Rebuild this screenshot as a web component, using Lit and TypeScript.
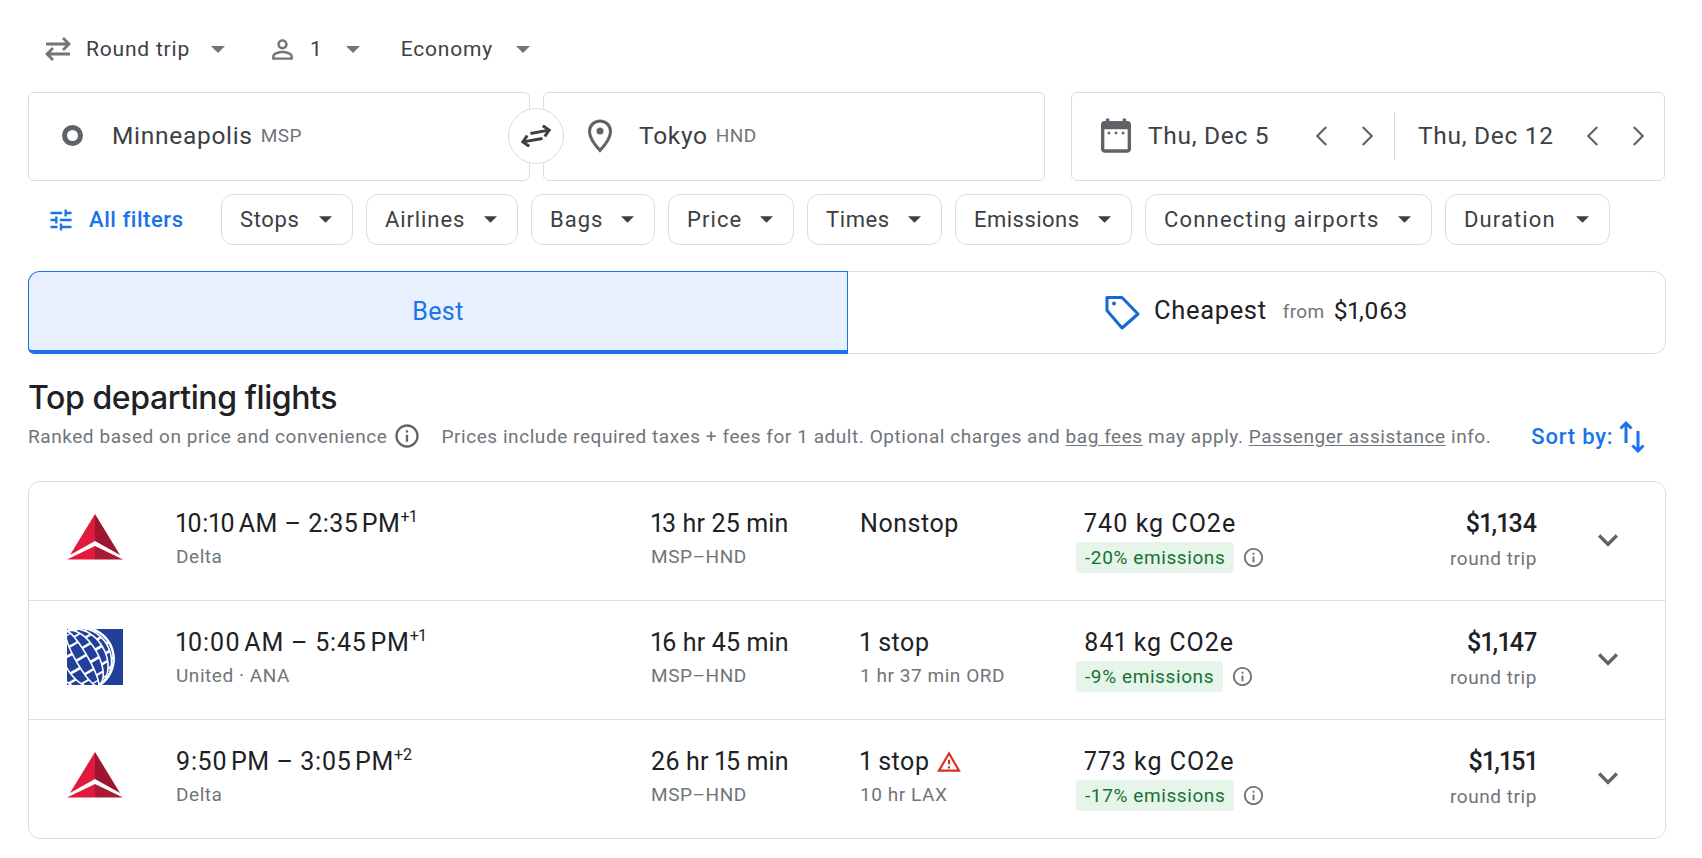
import { LitElement, html, css, svg } from "lit";
import { customElement } from "lit/decorators.js";

const P = {
  person: "M12 5.9c1.16 0 2.1.94 2.1 2.1s-.94 2.1-2.1 2.1S9.9 9.16 9.9 8s.94-2.1 2.1-2.1m0 9c2.97 0 6.1 1.46 6.1 2.1v1.1H5.9V17c0-.64 3.13-2.1 6.1-2.1M12 4C9.79 4 8 5.79 8 8s1.79 4 4 4 4-1.79 4-4-1.79-4-4-4zm0 9c-2.67 0-8 1.34-8 4v3h16v-3c0-2.66-5.33-4-8-4z",
  tune: "M3 17v2h6v-2H3zM3 5v2h10V5H3zm10 16v-2h8v-2h-8v-2h-2v6h2zM7 9v2H3v2h4v2h2V9H7zm14 4v-2H11v2h10zm-6-4h2V7h4V5h-4V3h-2v6z",
  cal: "M19 3h-1V1.500h-2V3H8V1.500H6V3H5C3.900 3 3 3.900 3 5v15c0 1.100.9 2 2 2h14c1.100 0 2-.9 2-2V5c0-1.100-.9-2-2-2zm0 17H5V8h14v12zM7 9.500h1.500V11H7zm4.250 0h1.500V11h-1.500zm4.250 0H17V11h-1.500z",
  warn: "M12 5.99L19.53 19H4.47L12 5.99M12 2L1 21h22L12 2zm1 14h-2v2h2v-2zm0-6h-2v4h2v-4z",
  info: "M11 7h2v2h-2zm0 4h2v6h-2zm1-9C6.48 2 2 6.48 2 12s4.48 10 10 10 10-4.48 10-10S17.52 2 12 2zm0 18c-4.41 0-8-3.59-8-8s3.59-8 8-8 8 3.59 8 8-3.59 8-8 8z",
  expand: "M16.59 8.59L12 13.17 7.41 8.59 6 10l6 6 6-6z",
  prev: "M15 5.500L8.500 12l6.500 6.500 1-1L10.500 12 16 6.500z",
  next: "M9 5.500l6.500 6.500L9 18.500l-1-1L13.500 12 8 6.500z",
};

const icon = (d: string, size: number, cls = "") =>
  html`<svg class="ic ${cls}" width=${size} height=${size} viewBox="0 0 24 24" fill="currentColor"><path d=${d}></path></svg>`;

const caret = (cls = "") =>
  html`<svg class="caret ${cls}" width="14" height="7" viewBox="0 0 14 7"><path d="M0 0h14L7 7z" fill="currentColor"></path></svg>`;

const delta = html`<svg width="56" height="46" viewBox="0 0 56 46" class="logo">
  <path d="M28 0L3 41 28 27z" fill="#e01a3c"></path>
  <path d="M28 0L53 41 28 27z" fill="#9c1631"></path>
  <path d="M0 45.500L28 32V45.500z" fill="#e01a3c"></path>
  <path d="M56 45.500L28 32V45.500z" fill="#a81a35"></path>
</svg>`;

/* United globe: an orthographic sphere whose axis is tilted 30deg. */
const G = { cx: 15.4, cy: 29.8, r: 31.5, tilt: (-30 * Math.PI) / 180 };
const rad = (d: number) => (d * Math.PI) / 180;
const gp = (lon: number, lat: number) => {
  const x = G.r * Math.cos(rad(lat)) * Math.sin(rad(lon));
  const y = -G.r * Math.sin(rad(lat));
  const c = Math.cos(G.tilt);
  const s = Math.sin(G.tilt);
  return `${(G.cx + x * c - y * s).toFixed(2)},${(G.cy + x * s + y * c).toFixed(2)}`;
};
const lons = [-90, -60, -35, -12, 10, 30, 48, 64, 78, 90];
const lats = [-75, -60, -45, -30, -15, 0, 15, 30, 45, 60, 75];
const range = (a: number, b: number, n: number) => Array.from({ length: n + 1 }, (_, i) => a + ((b - a) * i) / n);
const meridians = lons.map((lon) => svg`<polyline points=${range(-90, 90, 36).map((l) => gp(lon, l)).join(" ")} fill="none" stroke="#fff" stroke-width=${lon === 90 ? 2 : 1.6}></polyline>`);
const blocks = lats.flatMap((lat, j) =>
  lons.slice(0, -1).flatMap((lon, i) => {
    if ((i + j) % 2) return [];
    const next = lons[i + 1];
    const pts = [...range(lon, next, 4).map((l) => gp(l, lat)), ...range(next, lon, 4).map((l) => gp(l, lat + 5))];
    return [svg`<polygon points=${pts.join(" ")} fill="#fff"></polygon>`];
  })
);

const united = html`<svg width="56" height="56" viewBox="0 0 56 56" class="logo u">
  <rect width="56" height="56" fill="#21409a"></rect>
  ${meridians}${blocks}
</svg>`;

const filters = [
  { n: "Stops", w: 132, ls: 0.65 },
  { n: "Airlines", w: 152, ls: 0.9 },
  { n: "Bags", w: 124, ls: 1 },
  { n: "Price", w: 126, ls: 1.1 },
  { n: "Times", w: 135, ls: 0.6 },
  { n: "Emissions", w: 177, ls: 0.48 },
  { n: "Connecting airports", w: 287, ls: 1.18 },
  { n: "Duration", w: 165, ls: 1.12 },
];

const flights = [
  { logo: delta, time: "10:10\u202FAM – 2:35\u202FPM", ls: 0.48, plus: "+1", air: "Delta", dur: "13 hr 25 min", stops: "Nonstop", layover: "", warn: false, co2: "740 kg CO2e", em: "-20% emissions", price: "$1,134" },
  { logo: united, time: "10:00\u202FAM – 5:45\u202FPM", ls: 0.79, plus: "+1", air: "United · ANA", dur: "16 hr 45 min", stops: "1 stop", layover: "1 hr 37 min ORD", warn: false, co2: "841 kg CO2e", em: "-9% emissions", price: "$1,147" },
  { logo: delta, time: "9:50\u202FPM – 3:05\u202FPM", ls: 0.59, plus: "+2", air: "Delta", dur: "26 hr 15 min", stops: "1 stop", layover: "10 hr LAX", warn: true, co2: "773 kg CO2e", em: "-17% emissions", price: "$1,151" },
];

@customElement("app-root")
export class AppRoot extends LitElement {
  static styles = css`
    :host { display: block; width: 1702px; height: 858px; background: #fff; color: #3c4043; font-family: Roboto, "Liberation Sans", sans-serif; overflow: hidden; }
    .page { padding: 31px 37px 0 28px; }
    .ic { display: block; flex: none; }
    .caret { display: block; flex: none; color: #5f6368; }

    .top { display: flex; align-items: center; height: 36px; font-size: 21px; letter-spacing: 0.8px; padding-left: 16px; }
    .top .item { display: flex; align-items: center; }
    .top .ic { color: #70757a; }
    .top .caret { color: #70757a; }
    .trip .arrows { display: block; flex: none; color: #70757a; }
    .trip span { margin: 0 21px 0 14px; }
    .pax { margin-left: 42px; }
    .pax span { margin: 0 23px 0 12px; }
    .cabin { margin-left: 41px; }
    .cabin span { margin-right: 23px; }

    .search { display: flex; margin-top: 25px; height: 89px; position: relative; }
    .box { border: 1px solid #dadce0; border-radius: 6px; display: flex; align-items: center; box-sizing: border-box; font-size: 24.500px; letter-spacing: 0.7px; padding-bottom: 2px; }
    .origin { width: 502px; padding-left: 33px; }
    .origin .dot { width: 21px; height: 21px; box-sizing: border-box; border: 5px solid #5f6368; border-radius: 50%; margin-right: 29px; }
    .dest { width: 502px; margin-left: 13px; padding-left: 43px; }
    .dest .pin { color: #5f6368; margin-right: 26px; display: block; flex: none; }
    .code { font-size: 19px; color: #70757a; margin-left: 8px; letter-spacing: 0.4px; }
    .swap { position: absolute; left: 480px; top: 16px; width: 56px; height: 56px; border: 1px solid #dadce0; border-radius: 50%; background: #fff; box-sizing: border-box; display: flex; align-items: center; justify-content: center; color: #3c4043; }
    .dates { margin-left: 26px; flex: 1; padding-left: 24px; }
    .dates .cal { color: #5f6368; margin-right: 12px; }
    .date { width: 122px; white-space: nowrap; }
    .dates .arrow { color: #5f6368; }
    .dates .first { margin-left: 33px; }
    .dates .gap { margin-left: 11px; }
    .divider { width: 1px; height: 48px; background: #dadce0; margin: 0 23px 0 8px; }
    .d2 { width: 137px; }
    .d2 + .first { margin-left: 19px; }

    .chips { display: flex; align-items: center; gap: 13px; margin-top: 13px; height: 51px; font-size: 22px; }
    .all { display: flex; align-items: center; color: #1a73e8; font-weight: 500; width: 180px; padding-left: 19px; box-sizing: border-box; letter-spacing: 0.55px; }
    .all .ic { margin-right: 14px; }
    .chip { display: flex; align-items: center; justify-content: space-between; height: 51px; box-sizing: border-box; border: 1px solid #dadce0; border-radius: 12px; padding: 0 20px 0 18px; }
    .chip .caret { width: 13px; height: 7px; color: #3c4043; }

    .tabs { display: flex; margin-top: 26px; height: 83px; width: 1638px; box-sizing: border-box; border: 1px solid #dadce0; border-radius: 12px; position: relative; }
    .tab { flex: 1; display: flex; align-items: center; justify-content: center; font-size: 25px; letter-spacing: 0.4px; }
    .best { background: #e8f0fe; color: #1a73e8; margin: -1px 0 -1px -1px; border: 1px solid #1a73e8; border-bottom: 4px solid #1a73e8; border-radius: 12px 0 0 6px; flex: none; width: 820px; box-sizing: border-box; }
    .cheap { color: #202124; padding: 0 0 5px 0; font-size: 25.500px; letter-spacing: 0.65px; }
    .cheap .tag { color: #1967d2; margin: 5px 13px 0 0; }
    .from { font-size: 19px; color: #70757a; margin: 2px 9px 0 16px; letter-spacing: 0.4px; }
    .low { font-weight: 400; letter-spacing: 0.5px; font-size: 24.500px; font-variant-numeric: proportional-nums; }

    h2 { margin: 25px 0 0; font-size: 32px; line-height: 38px; font-weight: 500; color: #202124; font-family: Inter, Roboto, sans-serif; letter-spacing: -0.4px; }
    .note { display: flex; align-items: center; height: 40px; margin-top: -1px; font-size: 19px; letter-spacing: 0.56px; color: #70757a; white-space: nowrap; }
    .note .ic { color: #5f6368; margin: 0 20px 0 6px; }
    .note u { text-underline-offset: 2px; }
    .sort { display: flex; align-items: center; color: #1a73e8; font-size: 22px; font-weight: 500; margin-left: 40px; letter-spacing: 0.8px; }
    .sort svg { margin-left: 5px; }

    .list { margin-top: 25px; width: 1638px; height: 358px; box-sizing: border-box; border: 1px solid #dadce0; border-radius: 12px; display: flex; flex-direction: column; }
    .row { flex: 1; display: grid; grid-template-columns: 109px 475px 209px 216px 304px 157px 1fr; padding: 26px 0 0 38px; box-sizing: border-box; border-top: 1px solid #dadce0; }
    .row:first-child { border-top: 0; }
    .logo-cell { padding-top: 6px; }
    .logo { display: block; }
    .logo.u { margin-top: -4px; }
    .t { font-size: 25px; line-height: 32px; color: #202124; display: flex; align-items: center; white-space: nowrap; font-variant-numeric: proportional-nums; letter-spacing: 0.15px; }
    .t sup { font-size: 16px; line-height: 1; align-self: flex-start; margin-top: 1px; letter-spacing: 0; }
    .s { font-size: 19px; line-height: 24px; margin-top: 5px; color: #70757a; letter-spacing: 0.55px; }
    .stops { letter-spacing: 0.55px; }
    .t .ic { color: #d93025; margin-left: 6px; }
    .co2 { padding-left: 8px; letter-spacing: 1px; }
    .em { display: flex; align-items: center; margin-top: 2px; }
    .badge { background: #e6f4ea; color: #137333; border-radius: 4px; height: 31px; padding: 0 9px; font-size: 19px; letter-spacing: 0.6px; display: flex; align-items: center; }
    .em .ic { color: #70757a; margin-left: 8px; }
    .price { text-align: right; }
    .price .t { justify-content: flex-end; font-weight: 500; font-size: 25px; letter-spacing: 0; }
    .price .s { margin-top: 7px; }
    .more { padding: 12px 0 0 51px; color: #5f6368; }
  `;

  render() {
    return html`<div class="page">
      <div class="top">
        <div class="item trip">
          <svg class="arrows" width="28" height="24" viewBox="0 0 28 24" fill="none" stroke="currentColor" stroke-width="2.800"><path d="M2 7H25M19 1l6 6-6 6"></path><path d="M26 17H3M9 11l-6 6 6 6"></path></svg>
          <span>Round trip</span>${caret()}
        </div>
        <div class="item pax">${icon(P.person, 31)}<span>1</span>${caret()}</div>
        <div class="item cabin"><span>Economy</span>${caret()}</div>
      </div>

      <div class="search">
        <div class="box origin"><div class="dot"></div>Minneapolis<span class="code">MSP</span></div>
        <div class="swap">
          <svg width="34" height="34" viewBox="0 0 34 34" fill="none" stroke="currentColor" stroke-width="3"><g transform="rotate(-10 17 17)"><path d="M3 20.500h20M8.500 15l-5.500 5.500 5.500 5.500"></path><path d="M31 13.500H12M25.500 8l5.500 5.500-5.500 5.500"></path></g></svg>
        </div>
        <div class="box dest">
          <svg class="pin" width="26" height="34" viewBox="0 0 26 34" fill="none" stroke="currentColor" stroke-width="3"><path d="M13 2C6.800 2 2.500 6.800 2.500 12.500 2.500 18 7 25 13 31.500 19 25 23.500 18 23.500 12.500 23.500 6.800 19.200 2 13 2z"></path><circle cx="13" cy="12" r="3.500" fill="currentColor" stroke="none"></circle></svg>
          Tokyo<span class="code">HND</span>
        </div>
        <div class="box dates">
          <span class="cal">${icon(P.cal, 40)}</span>
          <span class="date">Thu, Dec 5</span>
          <span class="arrow first">${icon(P.prev, 36)}</span>
          <span class="arrow gap">${icon(P.next, 36)}</span>
          <span class="divider"></span>
          <span class="date d2">Thu, Dec 12</span>
          <span class="arrow first">${icon(P.prev, 36)}</span>
          <span class="arrow gap">${icon(P.next, 36)}</span>
        </div>
      </div>

      <div class="chips">
        <div class="all">${icon(P.tune, 28)}All filters</div>
        ${filters.map((f) => html`<div class="chip" style="width:${f.w}px;letter-spacing:${f.ls}px">${f.n}${caret()}</div>`)}
      </div>

      <div class="tabs">
        <div class="tab best">Best</div>
        <div class="tab cheap">
          <svg class="tag" width="36" height="36" viewBox="0 0 36 36" fill="none" stroke="currentColor" stroke-width="3" stroke-linejoin="round"><path d="M2 2.500H17L33 19 17 33 2 15.500z"></path><circle cx="9" cy="8.500" r="2" fill="currentColor" stroke="none"></circle></svg>
          Cheapest<span class="from">from</span><span class="low">$1,063</span>
        </div>
      </div>

      <h2>Top departing flights</h2>
      <div class="note">
        Ranked based on price and convenience ${icon(P.info, 28)}
        <span>Prices include required taxes + fees for 1 adult. Optional charges and <u>bag fees</u> may apply. <u>Passenger assistance</u> info.</span>
        <div class="sort">Sort by:
          <svg width="28" height="33" viewBox="0 0 28 33" fill="none" stroke="currentColor" stroke-width="3"><path d="M8 23V3M2.500 8.500L8 3l5.500 5.500"></path><path d="M20 11v20M14.500 25.500L20 31l5.500-5.500"></path></svg>
        </div>
      </div>

      <div class="list">
        ${flights.map(
          (f) => html`<div class="row">
            <div class="logo-cell">${f.logo}</div>
            <div><div class="t" style="letter-spacing:${f.ls}px">${f.time}<sup>${f.plus}</sup></div><div class="s">${f.air}</div></div>
            <div><div class="t">${f.dur}</div><div class="s">MSP–HND</div></div>
            <div><div class="t stops">${f.stops}${f.warn ? icon(P.warn, 26) : ""}</div><div class="s">${f.layover}</div></div>
            <div>
              <div class="t co2">${f.co2}</div>
              <div class="em"><div class="badge">${f.em}</div>${icon(P.info, 23)}</div>
            </div>
            <div class="price"><div class="t">${f.price}</div><div class="s">round trip</div></div>
            <div class="more">${icon(P.expand, 40)}</div>
          </div>`
        )}
      </div>
    </div>`;
  }
}
